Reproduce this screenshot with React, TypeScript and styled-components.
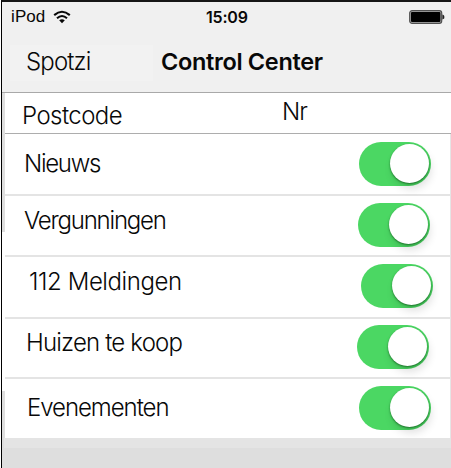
import React from 'react';
import styled, { createGlobalStyle } from 'styled-components';

const GlobalStyle = createGlobalStyle`
  body { margin: 0; background: #fff; overflow: hidden; }
  * { box-sizing: border-box; }
`;

const Screen = styled.div`
  width: 451px;
  height: 468px;
  display: flex;
  flex-direction: column;
  border-left: 1px solid #fff;
  background: #fff;
  color: #080808;
  font-family: Inter, 'Liberation Sans', sans-serif;
`;

const Frame = styled.div`
  flex: 1;
  display: flex;
  flex-direction: column;
  border-left: 1px solid #000;
  border-top: 2px solid #161616;
  background: #dedede;
`;

const StatusBar = styled.header`
  height: 30px;
  display: grid;
  grid-template-columns: 200px 1fr 42px;
  align-items: center;
  padding-left: 8px;
  background: #f0f0f0;
  font: 17px/20px 'Liberation Sans', Arial, sans-serif;
`;

const Carrier = styled.div`
  display: flex;
  align-items: center;
  gap: 8px;
  padding-left: 1px;
  letter-spacing: 0.1px;
`;

const Clock = styled.div`
  margin-left: -4px;
  font-family: Inter, sans-serif;
  font-size: 16px;
  font-weight: 600;
  letter-spacing: -0.2px;
`;

const NavBar = styled.nav`
  height: 61px;
  display: flex;
  align-items: flex-start;
  padding: 18px 0 0 8px;
  background: #f0f0f0;
  border-bottom: 1px solid #a9a9a9;
`;

const BackButton = styled.div`
  width: 143px;
  height: 36px;
  margin-top: -5px;
  padding: 5px 0 0 16px;
  background: #f2f2f2;
`;

const Title = styled.h1`
  margin: 0;
  padding-left: 8px;
  font-size: 23.5px;
  line-height: 24px;
  font-weight: 600;
  letter-spacing: -0.33px;
  white-space: nowrap;
`;

const Text = styled.span<{ $spacing?: number }>`
  display: block;
  font-size: 24px;
  line-height: 24px;
  font-weight: 300;
  letter-spacing: ${p => p.$spacing ?? 0}px;
  white-space: nowrap;
`;

const List = styled.main`
  display: flex;
  flex-direction: column;
  padding-left: 3px;
  background: linear-gradient(#dedede 0 139px, #fff 139px 298px, #dedede 298px);
`;

const AddressRow = styled.div`
  height: 41px;
  display: grid;
  grid-template-columns: 260px 1fr;
  padding: 11px 0 0 17px;
  background: #fff;
  border-bottom: 1px solid #adadad;
`;

const NumberField = styled.div`
  margin-top: -4px;
`;

const SettingRow = styled.div<{ $height: number; $last?: boolean }>`
  height: ${p => p.$height}px;
  display: grid;
  grid-template-columns: 352px 1fr;
  background: #fff;
  border-bottom: ${p => (p.$last ? 0 : 2)}px solid #e4e4e4;
  border-right: 1px solid #e5e5e5;
`;

const LabelCell = styled.div<{ $left: number; $top: number }>`
  padding: ${p => p.$top}px 0 0 ${p => p.$left}px;
`;

const ToggleCell = styled.div<{ $left: number; $top: number }>`
  padding: ${p => p.$top}px 0 0 ${p => p.$left}px;
`;

const Toggle = styled.button`
  display: flex;
  justify-content: flex-end;
  align-items: flex-start;
  width: 72px;
  height: 44px;
  padding: 2px 2px 0 0;
  border: 0;
  border-radius: 22px;
  background: #4bd763;
`;

const Knob = styled.span`
  width: 39px;
  height: 39px;
  border-radius: 50%;
  background: #fff;
  box-shadow: 0 1px 2px rgba(0, 60, 10, 0.6), 2px 6px 9px rgba(0, 0, 0, 0.12);
`;

const Footer = styled.footer`
  height: 10px;
  margin-left: 2px;
  background: #e4e4e4;
`;

const settings = [
  { name: 'Nieuws', height: 62, left: 19, top: 18, spacing: -1.3, toggleLeft: 2, toggleTop: 8 },
  { name: 'Vergunningen', height: 61, left: 19, top: 13, spacing: -1.2, toggleLeft: 1, toggleTop: 7 },
  { name: '112 Meldingen', height: 62, left: 24, top: 13, spacing: -0.42, toggleLeft: 4, toggleTop: 7 },
  { name: 'Huizen te koop', height: 60, left: 21, top: 12, spacing: -0.82, toggleLeft: 0, toggleTop: 6 },
  { name: 'Evenementen', height: 59, left: 22, top: 17, spacing: -1.05, toggleLeft: 2, toggleTop: 7 },
];

const WifiIcon = () => (
  <svg width="18" height="14" viewBox="0 0 18 14" fill="none" stroke="#080808">
    <path d="M1.2 5.1Q9 -1.6 16.8 5.1" strokeWidth="2.1" />
    <path d="M4 8.2Q9 3.8 14 8.2" strokeWidth="2.1" />
    <path d="M6.2 10.3Q9 8 11.8 10.3L9 13.2Z" fill="#080808" stroke="none" />
  </svg>
);

const BatteryIcon = () => (
  <svg width="36" height="14" viewBox="0 0 36 14">
    <rect x="0.7" y="0.7" width="32" height="12.6" rx="2.4" fill="#aaa" stroke="#505050" strokeWidth="1.2" />
    <rect x="2" y="2" width="29.4" height="10" rx="1" fill="#000" />
    <path d="M33.4 4.5Q36 5 35.2 8.4L33.4 9.5Z" fill="#222" />
  </svg>
);

export default function App() {
  return (
    <>
      <GlobalStyle />
      <Screen>
        <Frame>
          <StatusBar>
            <Carrier>iPod <WifiIcon /></Carrier>
            <Clock>15:09</Clock>
            <BatteryIcon />
          </StatusBar>
          <NavBar>
            <BackButton><Text $spacing={-0.85}>Spotzi</Text></BackButton>
            <Title>Control Center</Title>
          </NavBar>
          <List>
            <AddressRow>
              <Text $spacing={-0.55}>Postcode</Text>
              <NumberField><Text $spacing={-1}>Nr</Text></NumberField>
            </AddressRow>
            {settings.map((s, i) => (
              <SettingRow key={s.name} $height={s.height} $last={i === settings.length - 1}>
                <LabelCell $left={s.left} $top={s.top}><Text $spacing={s.spacing}>{s.name}</Text></LabelCell>
                <ToggleCell $left={s.toggleLeft} $top={s.toggleTop}>
                  <Toggle role="switch" aria-checked="true" aria-label={s.name}><Knob /></Toggle>
                </ToggleCell>
              </SettingRow>
            ))}
          </List>
          <Footer />
        </Frame>
      </Screen>
    </>
  );
}
